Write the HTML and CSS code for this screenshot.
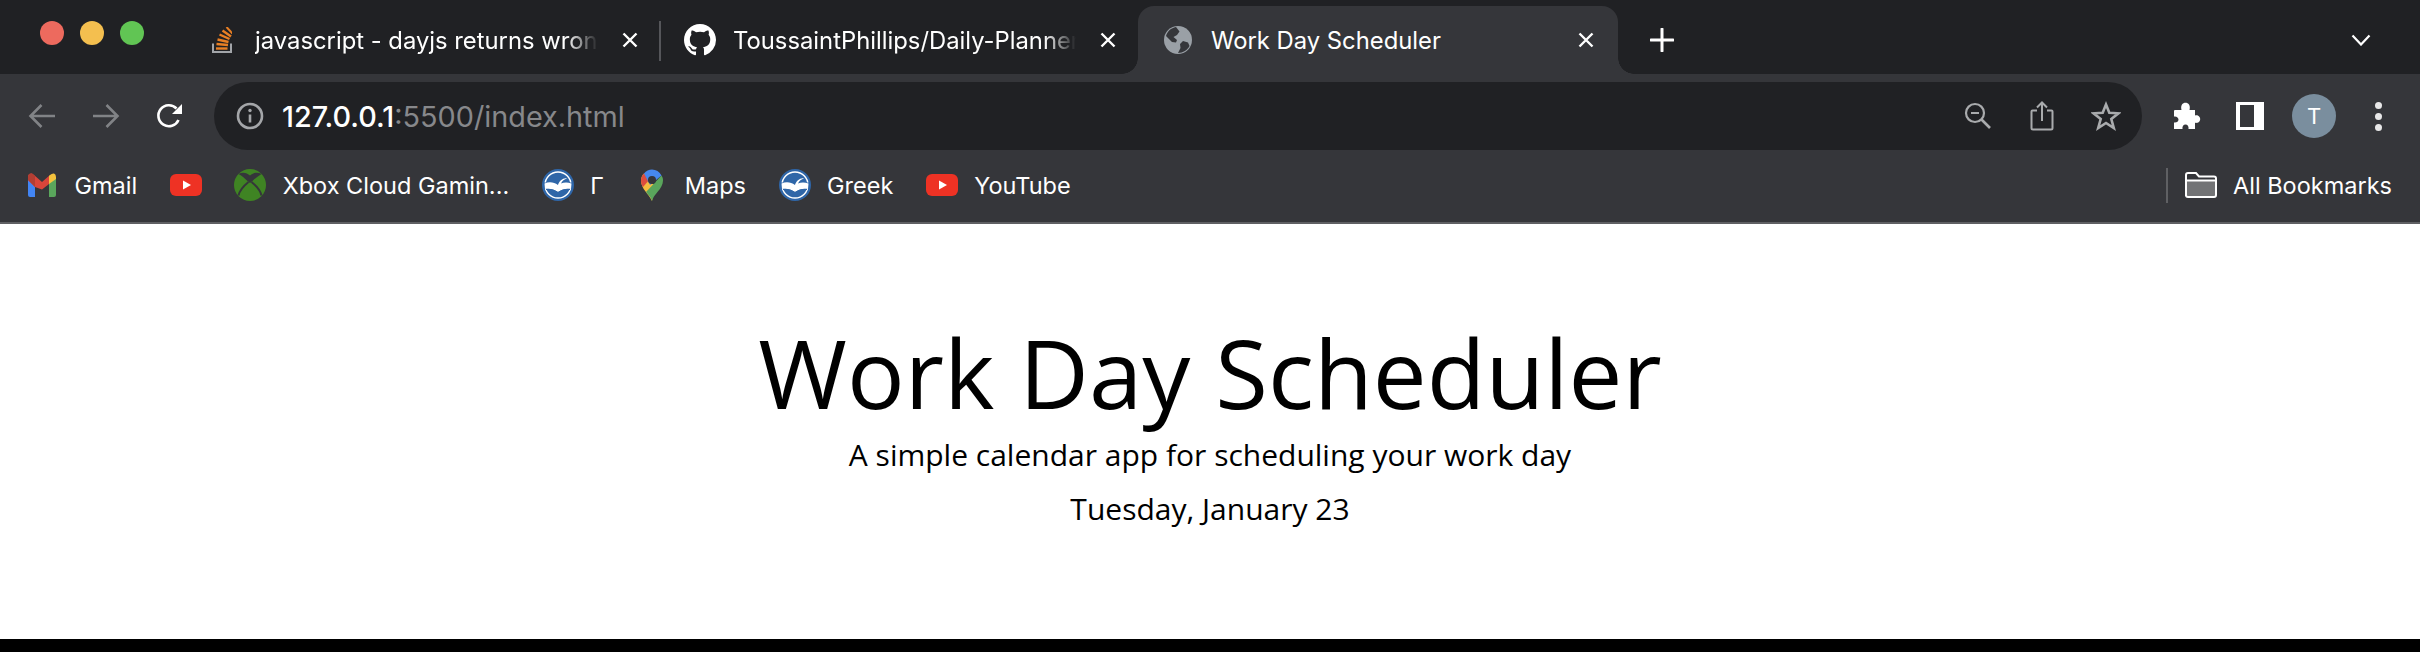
FILE: index.html
```html
<!DOCTYPE html>
<html lang="en">
<head>
  <meta charset="UTF-8" />
  <title>Work Day Scheduler</title>
  <link rel="stylesheet" href="styles.css">
</head>
<body>

<svg class="defs" width="0" height="0" aria-hidden="true">
  <symbol id="ico-youtube" viewBox="0 0 32 24">
    <rect x="0" y="1" width="32" height="22" rx="6" fill="#ee3224"/>
    <path d="M13 7.5 21 12 13 16.500z" fill="#fff"/>
  </symbol>
  <symbol id="ico-greek" viewBox="0 0 32 32">
    <circle cx="16" cy="16" r="16" fill="#2f66a8"/>
    <circle cx="16" cy="16" r="13" fill="none" stroke="#fff" stroke-width="1.400"/>
    <path d="M1 13.500H31V20H1z" fill="#2f66a8"/>
    <path d="M2.500 14.500C7 12.500 12 13 16 16 17 12 21.500 8.500 25 9.500 22.500 10 20 12 19 14.500 22 13 26 13 29.500 14.500L29 20C25 19 20 20 16 23 12 20 7 19 3 20z" fill="#fff"/>
    <path d="M4 20.500C8 20 12.500 21 16 23.500 19.500 21 24 20 28 20.500" fill="none" stroke="#2f66a8" stroke-width="1"/>
  </symbol>
</svg>

<!-- barra de pestañas -->
<div class="tabstrip">
  <div class="lights">
    <span class="light red"></span>
    <span class="light yellow"></span>
    <span class="light green"></span>
  </div>

  <div class="tab tab-sep">
    <span class="tab-icon">
      <svg width="20" height="26" viewBox="0 0 20 26">
        <path d="M1 16.500V25H19V16.500" fill="none" stroke="#a2a5a9" stroke-width="2"/>
        <g stroke="#e87f24" stroke-width="2.400" fill="none">
          <path d="M4 21.500H15.500"/>
          <path d="M4.500 17 16 18"/>
          <path d="M5.500 12.500 16.500 15"/>
          <path d="M7.500 7.500 17.500 12"/>
          <path d="M10.500 3.500 19 9.500"/>
          <path d="M13.500 1 19.500 7.500" transform="translate(1 -1)" stroke-width="2"/>
        </g>
      </svg>
    </span>
    <span class="tab-title">javascript - dayjs returns wrong date</span>
    <span class="tab-close">
      <svg width="16" height="16" viewBox="0 0 16 16"><path d="M1.500 1.500 14.500 14.500M14.500 1.500 1.500 14.500" stroke="#fff" stroke-width="2.400"/></svg>
    </span>
  </div>

  <div class="tab tab-before">
    <span class="tab-icon">
      <svg width="32" height="32" viewBox="0 0 16 16">
        <path fill="#fff" d="M8 0C3.58 0 0 3.58 0 8c0 3.54 2.29 6.53 5.47 7.59.4.07.55-.17.55-.38 0-.19-.01-.82-.01-1.49-2.01.37-2.53-.49-2.69-.94-.09-.23-.48-.94-.82-1.13-.28-.15-.68-.52-.01-.53.63-.01 1.08.58 1.23.82.72 1.21 1.87.87 2.33.66.07-.52.28-.87.51-1.07-1.78-.2-3.64-.89-3.64-3.95 0-.87.31-1.59.82-2.15-.08-.2-.36-1.02.08-2.12 0 0 .67-.21 2.2.82.64-.18 1.32-.27 2-.27.68 0 1.36.09 2 .27 1.53-1.04 2.2-.82 2.2-.82.44 1.1.16 1.92.08 2.12.51.56.82 1.27.82 2.15 0 3.07-1.87 3.75-3.65 3.95.29.25.54.73.54 1.48 0 1.07-.01 1.93-.01 2.2 0 .21.15.46.55.38A8.013 8.013 0 0 0 16 8c0-4.42-3.58-8-8-8z"/>
      </svg>
    </span>
    <span class="tab-title">ToussaintPhillips/Daily-Planner: A simple</span>
    <span class="tab-close">
      <svg width="16" height="16" viewBox="0 0 16 16"><path d="M1.500 1.500 14.500 14.500M14.500 1.500 1.500 14.500" stroke="#fff" stroke-width="2.400"/></svg>
    </span>
  </div>

  <div class="tab tab-active">
    <span class="tab-icon">
      <svg width="28" height="28" viewBox="0 0 28 28">
        <circle cx="14" cy="14" r="14" fill="#9aa0a6"/>
        <path d="M12 1C7 2 3.500 5 2 10L8 16 12 16.500 13 14 9.500 11 13 9 15.500 5.500ZM19 15 16 18 16.500 22 14 27C19 27 23.500 24 25.500 20L24 16.500Z" fill="#35363a"/>
      </svg>
    </span>
    <span class="tab-title">Work Day Scheduler</span>
    <span class="tab-close">
      <svg width="16" height="16" viewBox="0 0 16 16"><path d="M1.500 1.500 14.500 14.500M14.500 1.500 1.500 14.500" stroke="#fff" stroke-width="2.400"/></svg>
    </span>
  </div>

  <div class="new-tab">
    <svg width="24" height="24" viewBox="0 0 24 24"><path d="M12 1V23M1 12H23" stroke="#fff" stroke-width="3" stroke-linecap="round"/></svg>
  </div>

  <div class="tab-search">
    <svg width="20" height="12" viewBox="0 0 20 12"><path d="M1.500 1.500 10 10.500 18.500 1.500" fill="none" stroke="#fff" stroke-width="2.200"/></svg>
  </div>
</div>

<!-- barra de direcciones -->
<div class="toolbar">
  <button class="tool" title="Back">
    <svg width="28" height="26" viewBox="0 0 28 26"><path d="M27 13H3M13.500 2 2.500 13 13.500 24" fill="none" stroke="#818386" stroke-width="2.600"/></svg>
  </button>
  <button class="tool" title="Forward">
    <svg width="28" height="26" viewBox="0 0 28 26"><path d="M1 13H25M14.500 2 25.500 13 14.500 24" fill="none" stroke="#818386" stroke-width="2.600"/></svg>
  </button>
  <button class="tool" title="Reload">
    <svg width="28" height="28" viewBox="0 0 28 28"><path d="M22.500 18A10.500 10.500 0 1 1 20.500 6.500" fill="none" stroke="#fff" stroke-width="2.600"/><path d="M26 2V12H16z" fill="#fff"/></svg>
  </button>

  <div class="omnibox">
    <span class="omni-info">
      <svg width="28" height="28" viewBox="0 0 28 28"><circle cx="14" cy="14" r="12" fill="none" stroke="#a4a6a9" stroke-width="2.600"/><path d="M14 12.500V20.500" stroke="#a4a6a9" stroke-width="2.600"/><circle cx="14" cy="8.500" r="1.700" fill="#a4a6a9"/></svg>
    </span>
    <span class="url"><span class="url-host">127.0.0.1</span>:5500/index.html</span>
    <span class="omni-btn">
      <svg width="28" height="28" viewBox="0 0 28 28"><circle cx="11" cy="11" r="9" fill="none" stroke="#a9abad" stroke-width="2.200"/><path d="M7 11H15" stroke="#a9abad" stroke-width="2"/><path d="M17.500 17.500 26 26" stroke="#a9abad" stroke-width="2.600"/></svg>
    </span>
    <span class="omni-btn">
      <svg width="24" height="30" viewBox="0 0 24 30"><path d="M7 9.500H2.500Q1.500 9.500 1.500 10.500V27Q1.500 28.500 3 28.500H21Q22.500 28.500 22.500 27V10.500Q22.500 9.500 21.500 9.500H17M12 20V2M7 6.500 12 1.500 17 6.500" fill="none" stroke="#a9abad" stroke-width="2"/></svg>
    </span>
    <span class="omni-btn">
      <svg width="30" height="30" viewBox="0 0 30 30"><path d="M15 3.500 18.300 11.800 27.500 12.300 20.300 18 22.800 27 15 22 7.200 27 9.700 18 2.500 12.300 11.700 11.800z" fill="none" stroke="#a9abad" stroke-width="2.600"/></svg>
    </span>
  </div>

  <button class="tool tool-first" title="Extensions">
    <svg width="30" height="30" viewBox="0 0 30 30"><path d="M4 9H10.500C10 7 10 5 11 3.500 12.500 1 16.500 1 18 3.500 19 5 19 7 18.500 9H24V14.500C26 14 27.500 14.500 28.500 16 30 18 29 21 26.500 21.800 25.500 22 24.500 22 24 21.800V28H17.500C18 25.500 16.500 23.500 14.500 23.500 12.500 23.500 11 25.500 11.500 28H3V21.500C5.500 22 7.500 20.500 7.500 18.500 7.500 16.500 5.500 15 3 15.500V10Q3 9 4 9Z" fill="#fff"/></svg>
  </button>
  <button class="tool" title="Side panel">
    <svg width="28" height="28" viewBox="0 0 28 28"><path fill-rule="evenodd" d="M0 0H28V28H0ZM4 3V25H18V3Z" fill="#fff"/></svg>
  </button>
  <button class="tool" title="Profile"><span class="avatar">T</span></button>
  <button class="tool" title="Menu"><span class="dots"><i></i><i></i><i></i></span></button>
</div>

<!-- marcadores -->
<div class="bookmarks">
  <a class="bm">
    <svg class="bm-icon" width="32" height="32" viewBox="0 0 32 32">
      <path d="M2 26V9L9 13.500V28H4Q2 28 2 26Z" fill="#4285f4"/>
      <path d="M23 28V13.500L30 9V26Q30 28 28 28Z" fill="#5aa65c"/>
      <path d="M9 18 2 11V8Q2 4 6 4.500Q7 5 8 6L16 13 24 6 23 15 16 20.500Z" fill="#d9453a"/>
      <path d="M2 11V8Q2 4 6 4.500Q7 5 8 6L9 7V18Z" fill="#b23e33"/>
      <path d="M23 15V7L24 6Q26 4.200 28 4.500 30 5 30 8V10Z" fill="#f4c23d"/>
    </svg>
    <span class="bm-text">Gmail</span>
  </a>
  <a class="bm">
    <svg class="bm-icon" width="32" height="24"><use href="#ico-youtube"/></svg>
  </a>
  <a class="bm">
    <svg class="bm-icon" width="32" height="32" viewBox="0 0 32 32">
      <circle cx="16" cy="16" r="16" fill="#3f8423"/>
      <path d="M4.500 5C9 2.500 13 4 16 6.500 19 4 23 2.500 27.500 5 24 7 21 9.500 18.500 12L16 14 13.500 12C11 9.500 8 7 4.500 5Z" fill="#35363a"/>
      <path d="M14.500 13C9.500 17 5.500 22 4.500 26.500M17.500 13C22.500 17 26.500 22 27.500 26.500" fill="none" stroke="#35363a" stroke-width="2"/>
    </svg>
    <span class="bm-text">Xbox Cloud Gamin...</span>
  </a>
  <a class="bm">
    <svg class="bm-icon" width="32" height="32"><use href="#ico-greek"/></svg>
    <span class="bm-text">Γ</span>
  </a>
  <a class="bm">
    <svg class="bm-icon" width="32" height="32" viewBox="0 0 32 32">
      <path d="M16 32C13 25 5 20 5 11.500 5 8.500 6 6.500 8 4.500L21 19C19 23 17 26 16 32Z" fill="#f4bd3f"/>
      <path d="M16 32C17.500 25 27 20 27 11.500 27 9.500 26.500 8 25.500 6.500L10 23C12.500 26 15 28.500 16 32Z" fill="#5aa65c"/>
      <path d="M8 4.500C6 6.500 5 8.500 5 11.500 5 14 6 16.500 7 18L14 10Z" fill="#dc4d3f"/>
      <path d="M8 4.500C10 2 13 0.500 16 0.500 20 0.500 23.500 2.500 25.500 6.500L14 16Z" fill="#4688ee"/>
      <circle cx="16" cy="11" r="4" fill="#35363a"/>
    </svg>
    <span class="bm-text">Maps</span>
  </a>
  <a class="bm">
    <svg class="bm-icon" width="32" height="32"><use href="#ico-greek"/></svg>
    <span class="bm-text">Greek</span>
  </a>
  <a class="bm">
    <svg class="bm-icon" width="32" height="24"><use href="#ico-youtube"/></svg>
    <span class="bm-text">YouTube</span>
  </a>

  <a class="bm bm-all">
    <svg class="bm-icon" width="32" height="26" viewBox="0 0 32 26">
      <path d="M2 9H30V23Q30 25 28 25H4Q2 25 2 23Z" fill="#727375"/>
      <path d="M1 8.500H31M1 24V3Q1 1 3 1H11L14 4.500H29Q31 4.500 31 6.500V23Q31 25 29 25H3Q1 25 1 23Z" fill="none" stroke="#fff" stroke-width="2"/>
    </svg>
    <span class="bm-text">All Bookmarks</span>
  </a>
</div>

<!-- contenido de la pagina -->
<main class="page">
  <header class="jumbotron">
    <h1 class="display">Work Day Scheduler</h1>
    <p class="lead">A simple calendar app for scheduling your work day</p>
    <p class="lead" id="currentDay">Tuesday, January 23</p>
  </header>
</main>

<div class="bottom-bar"></div>

</body>
</html>
```

FILE: styles.css
```css
* {
  box-sizing: border-box;
}

html, body {
  height: 100%;
}

body {
  margin: 0;
  display: flex;
  flex-direction: column;
  overflow: hidden;
  background: #fff;
  font-family: 'Inter', 'Liberation Sans', sans-serif;
}

.defs {
  position: absolute;
}

/* pestañas */
.tabstrip {
  display: flex;
  height: 74px;
  background: #202124;
  flex-shrink: 0;
}

.lights {
  display: flex;
  gap: 16px;
  width: 182px;
  padding: 21px 0 0 40px;
}

.light {
  width: 24px;
  height: 24px;
  border-radius: 50%;
}

.red { background: #ed6a5e; }
.yellow { background: #f4bf4f; }
.green { background: #61c554; }

.tab {
  position: relative;
  display: flex;
  align-items: center;
  width: 478px;
  height: 68px;
  margin-top: 6px;
  padding: 0 18px 0 24px;
  color: #fff;
  font-size: 23.800px;
}

.tab-sep::after {
  content: "";
  position: absolute;
  right: -1px;
  top: 15px;
  height: 40px;
  width: 2px;
  background: #55565a;
}

.tab-active {
  width: 480px;
  padding-right: 20px;
  background: #35363a;
  border-radius: 16px 16px 0 0;
}

.tab-active::before,
.tab-active::after {
  content: "";
  position: absolute;
  bottom: 0;
  width: 16px;
  height: 16px;
}

.tab-active::before {
  left: -16px;
  background: radial-gradient(circle at 0 0, #202124 15.500px, #35363a 16px);
}

.tab-active::after {
  right: -16px;
  background: radial-gradient(circle at 100% 0, #202124 15.500px, #35363a 16px);
}

.tab-icon {
  display: flex;
  align-items: center;
  justify-content: center;
  width: 32px;
  height: 32px;
  margin-right: 17px;
  flex-shrink: 0;
}

.tab-title {
  flex: 1;
  min-width: 0;
  overflow: hidden;
  white-space: nowrap;
  -webkit-mask-image: linear-gradient(90deg, #000 calc(100% - 36px), transparent calc(100% - 4px));
  mask-image: linear-gradient(90deg, #000 calc(100% - 36px), transparent calc(100% - 4px));
}

.tab-active .tab-title {
  -webkit-mask-image: none;
  mask-image: none;
}

.tab-close {
  display: flex;
  align-items: center;
  justify-content: center;
  width: 24px;
  height: 24px;
  margin-left: 16px;
  flex-shrink: 0;
}

.new-tab {
  display: flex;
  align-items: center;
  justify-content: center;
  width: 24px;
  margin-left: 32px;
  padding-top: 6px;
}

.tab-search {
  display: flex;
  align-items: center;
  justify-content: center;
  width: 24px;
  margin-left: auto;
  margin-right: 47px;
  padding-top: 6px;
}

/* direccion */
.toolbar {
  display: flex;
  height: 76px;
  padding: 8px 10px 0;
  background: #35363a;
  flex-shrink: 0;
}

.tool {
  display: flex;
  align-items: center;
  justify-content: center;
  width: 64px;
  height: 68px;
  padding: 0;
  border: none;
  background: none;
  flex-shrink: 0;
}

.omnibox {
  display: flex;
  align-items: center;
  flex: 1;
  margin: 0 12px;
  padding: 0 4px 0 22px;
  background: #202124;
  border-radius: 34px;
}

.omni-info {
  display: flex;
  width: 28px;
  margin-right: 18px;
}

.url {
  flex: 1;
  color: #87888b;
  font-size: 28.800px;
  white-space: nowrap;
}

.url-host {
  color: #fff;
  font-weight: 500;
}

.omni-btn {
  display: flex;
  align-items: center;
  justify-content: center;
  width: 64px;
  height: 100%;
}

.avatar {
  display: flex;
  align-items: center;
  justify-content: center;
  width: 44px;
  height: 44px;
  border-radius: 50%;
  background: #7a8e9e;
  color: #fff;
  font-family: 'Inter', sans-serif;
  font-size: 22px;
}

.dots {
  display: flex;
  flex-direction: column;
  gap: 4px;
}

.dots i {
  display: block;
  width: 7px;
  height: 7px;
  border-radius: 50%;
  background: #e8e8e8;
}

/* marcadores */
.bookmarks {
  display: flex;
  align-items: center;
  gap: 32.500px;
  height: 74px;
  padding: 0 28px 2px 26px;
  background: #35363a;
  border-bottom: 2px solid #5f6063;
  flex-shrink: 0;
}

.bm {
  display: flex;
  align-items: center;
  gap: 16.500px;
  color: #fff;
  font-size: 23.500px;
  white-space: nowrap;
}

.bm-all {
  position: relative;
  margin-left: auto;
}

.bm-all::before {
  content: "";
  position: absolute;
  left: -19px;
  top: -3px;
  bottom: -3px;
  width: 2px;
  background: #5f6063;
}

/* pagina */
.page {
  flex: 1;
  background: #fff;
  color: #000;
  font-family: 'Open Sans', sans-serif;
  text-align: center;
}

.jumbotron {
  padding-top: 90px;
}

.display {
  margin: 0 0 7px;
  font-size: 96px;
  font-weight: 400;
  line-height: 1.2;
}

.lead {
  margin: 0 0 16px;
  font-size: 30px;
  line-height: 1.25;
}

.bottom-bar {
  height: 13px;
  background: #000;
  flex-shrink: 0;
}
```
